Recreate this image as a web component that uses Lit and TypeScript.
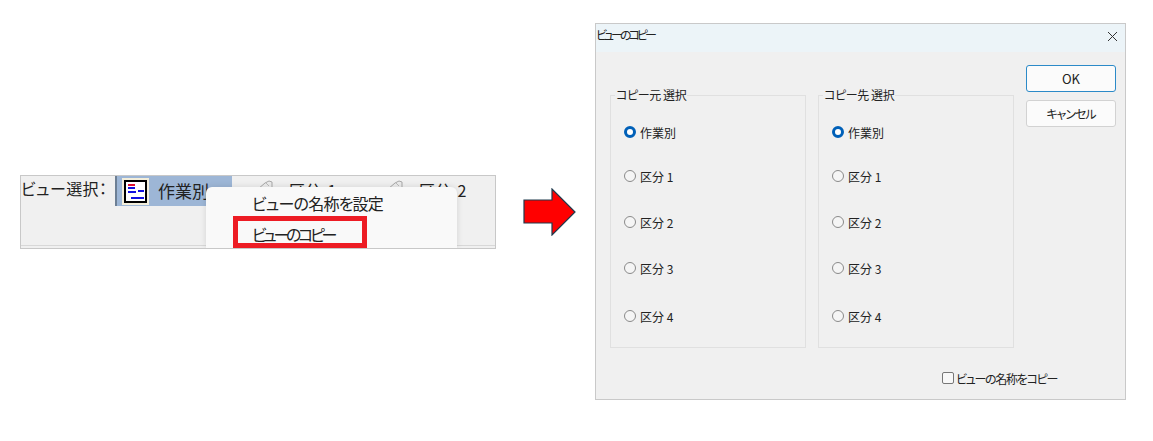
import { LitElement, html, css } from "lit";
import { customElement } from "lit/decorators.js";

const OPTIONS = ["作業別", "区分 1", "区分 2", "区分 3", "区分 4"];
const GAPS = [0, 36, 38, 38, 40];

@customElement("app-root")
export class AppRoot extends LitElement {
  static styles = css`
    :host { display: block; width: 1153px; height: 441px; background: #fff; overflow: hidden;
      font-family: "Noto Sans CJK JP", "Noto Sans", sans-serif; color: #222; font-feature-settings: "palt"; }
    .page { display: flex; align-items: flex-start; padding: 23px 0 0 20px; }
    .toolbar { position: relative; box-sizing: border-box; width: 476px; height: 74px; margin-top: 152px;
      background: #f0f0f0; border: 1px solid #c8c8c8; box-shadow: inset 0 -2px 0 #f0f0f0, inset 0 -3px 0 #d8d8d8; overflow: hidden; }
    .tabs { display: flex; align-items: flex-start; height: 31px; margin-top: -1px; font-size: 16px; line-height: 24px; }
    .label { width: 94px; flex: none; white-space: nowrap; letter-spacing: .4px; padding-top: 1px; }
    .tab { display: flex; align-items: flex-start; box-sizing: border-box; height: 31px; }
    .tab.sel { width: 117px; background: #9db6d6; border-left: 2px solid #6d7f94; border-top: 1px solid #7f8a98; }
    .ico { width: 27px; height: 27px; background: #f3eedb; margin: 2px 0 0 5px; flex: none; display: block; }
    .tab .t { margin-left: 9px; white-space: nowrap; font-size: 17px; padding-top: 3px; }
    .tab.plain { width: 130px; padding-left: 20px; }
    .tab.plain svg { flex: none; margin-top: 3px; }
    .tab.plain .t { margin-left: 13px; font-size: 16px; word-spacing: 3px; }
    .menu { position: absolute; left: 185px; top: 11px; width: 251px; height: 61px; overflow: hidden;
      background: #f9f9f9; border-radius: 6px 6px 0 0; box-shadow: 0 0 6px rgba(0,0,0,.12);
      font-size: 16px; color: #222; }
    .mi { position: absolute; left: 46px; white-space: nowrap; line-height: 24px; }
    .mi.a { top: 4px; letter-spacing: -.8px; }
    .mi.b { top: 35px; letter-spacing: -3.3px; }
    .hl { position: absolute; left: 27px; top: 29px; width: 134px; height: 32px; box-sizing: border-box; border: 5px solid #ed1c24; }
    .arrow { margin: 165px 0 0 27px; flex: none; display: block; }
    .dialog { box-sizing: border-box; width: 531px; height: 377px; margin-left: 19px; background: #f0f0f0;
      border: 1px solid #c9c9c9; display: flex; flex-direction: column; font-size: 12px; }
    .title { height: 28px; flex: none; background: #ecf4f8; display: flex; align-items: flex-start;
      justify-content: space-between; padding: 0 7px 0 0; line-height: 22px; letter-spacing: -3px; }
    .title svg { display: block; margin-top: 7px; }
    .body { display: flex; flex-direction: column; flex: 1; padding: 43px 0 0 14px; }
    .row { display: flex; align-items: flex-start; }
    .group { box-sizing: border-box; width: 196px; height: 253px; border: 1px solid #e0e0e0; margin-right: 12px;
      position: relative; padding: 27px 0 0 13px; }
    .legend { position: absolute; left: 4px; top: -9px; background: #f0f0f0; padding: 0 1px; line-height: 16px; white-space: nowrap; letter-spacing: -.4px; }
    .opt { display: flex; align-items: center; height: 18px; gap: 4px; white-space: nowrap; }
    .radio { width: 10px; height: 10px; border: 1px solid #8a8a8a; border-radius: 50%; background: #f5f5f5; flex: none; }
    .radio.on { box-sizing: border-box; width: 12px; height: 12px; border: 3.5px solid #0060b8; background: #fff; }
    .btns { display: flex; flex-direction: column; gap: 8px; margin-top: -30px; }
    .btn { box-sizing: border-box; width: 90px; height: 27px; border: 1px solid #d2d2d2; border-radius: 3px; background: #fbfbfb;
      display: flex; align-items: center; justify-content: center; letter-spacing: -1px; }
    .btn.def { border: 1px solid #2b8ac8; font-size: 13px; letter-spacing: 0; }
    .foot { display: flex; align-items: center; gap: 2px; height: 18px; margin: 21px 0 0 332px; white-space: nowrap; letter-spacing: -1.3px; }
    .box { width: 10px; height: 10px; border: 1px solid #777; border-radius: 2px; background: #f8f8f8; }
  `;

  private group(title: string) {
    return html`<div class="group">
      <div class="legend">${title}</div>
      ${OPTIONS.map((o, i) => html`<div class="opt" style="margin-top:${GAPS[i] - (i ? 10 : 0)}px">
        <span class="radio ${i === 0 ? "on" : ""}"></span><span>${o}</span></div>`)}
    </div>`;
  }

  private pin() {
    return html`<svg width="24" height="24" viewBox="0 0 24 24"><path d="M6 11 L13 5 L17 3 L20 4 L20 10 L17 12" fill="#ececec" stroke="#a8a8a8"/><path d="M14 5 L17 8" fill="none" stroke="#bbb"/></svg>`;
  }

  render() {
    return html`<div class="page">
      <div class="toolbar">
        <div class="tabs">
          <span class="label">ビュー選択：</span>
          <div class="tab sel">
            <svg class="ico" viewBox="0 0 27 27">
              <rect x="3" y="3" width="21" height="21" fill="#fff" stroke="#000" stroke-width="2"/>
              <rect x="6" y="6" width="7" height="2" fill="#e01030"/><rect x="6" y="9" width="7" height="2" fill="#1010e0"/>
              <rect x="6" y="13" width="8" height="2" fill="#1010e0"/><rect x="16" y="12" width="6" height="2" fill="#1010e0"/>
              <rect x="9" y="19" width="13" height="2" fill="#1010e0"/>
            </svg>
            <span class="t">作業別</span>
          </div>
          <div class="tab plain">${this.pin()}<span class="t">区分 1</span></div>
          <div class="tab plain">${this.pin()}<span class="t">区分 2</span></div>
        </div>
        <div class="menu">
          <div class="mi a">ビューの名称を設定</div>
          <div class="mi b">ビューのコピー</div>
          <div class="hl"></div>
        </div>
      </div>
      <svg class="arrow" width="53" height="48" viewBox="0 0 53 48">
        <path d="M1 12 H29 V1 L52 24 L29 47 V35 H1 Z" fill="#ff0000" stroke="#1f3a4d" stroke-width="1.2"/>
      </svg>
      <div class="dialog">
        <div class="title"><span>ビューのコピー</span>
          <svg width="11" height="11" viewBox="0 0 11 11"><path d="M1 1 L10 10 M10 1 L1 10" stroke="#333" stroke-width="1"/></svg>
        </div>
        <div class="body">
          <div class="row">
            ${this.group("コピー元 選択")}
            ${this.group("コピー先 選択")}
            <div class="btns">
              <div class="btn def">OK</div>
              <div class="btn">キャンセル</div>
            </div>
          </div>
          <div class="foot"><span class="box"></span><span>ビューの名称をコピー</span></div>
        </div>
      </div>
    </div>`;
  }
}
